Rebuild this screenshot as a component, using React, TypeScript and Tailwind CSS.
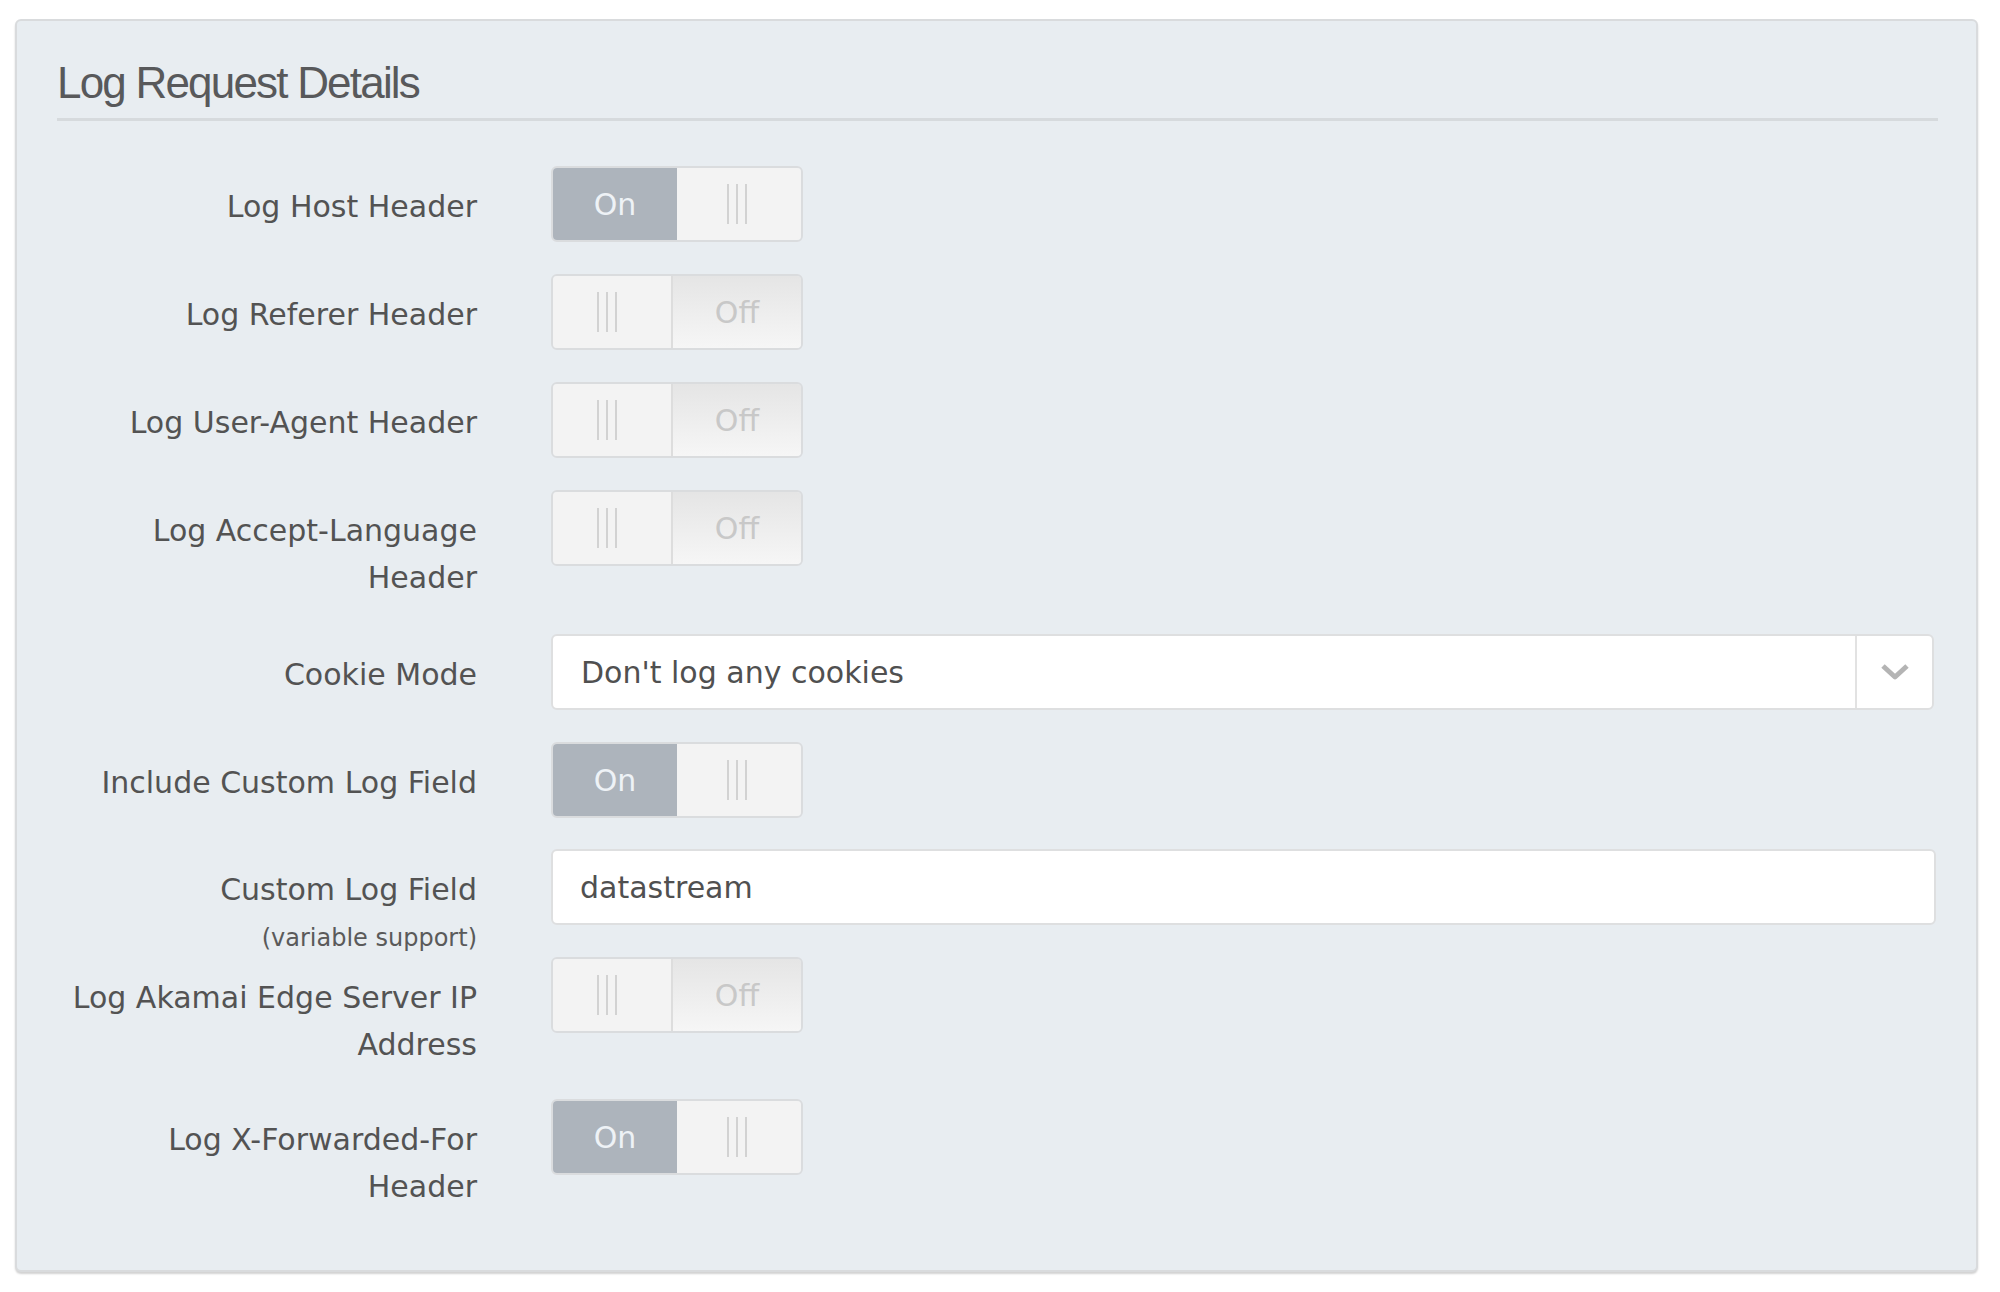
import type { ReactNode } from 'react'

const sans = "font-['DejaVu_Sans',Verdana,sans-serif]"

function Grip() {
  return (
    <div className="flex h-[40px] gap-[7px]">
      <span className="w-[2px] bg-[#d2d2d2]" />
      <span className="w-[2px] bg-[#d2d2d2]" />
      <span className="w-[2px] bg-[#d2d2d2]" />
    </div>
  )
}

function Toggle({ on }: { on: boolean }) {
  return (
    <div className="flex h-[76px] w-[252px] overflow-hidden rounded-[6px] border-2 border-[#dadcde]">
      {on ? (
        <>
          <div className="flex w-[124px] items-center justify-center bg-[#adb4bc] text-[30px] text-[#eef2f6]">
            On
          </div>
          <div className="flex flex-1 items-center justify-center bg-[#f3f3f3] pr-[4px]">
            <Grip />
          </div>
        </>
      ) : (
        <>
          <div className="flex w-[120px] items-center justify-center border-r-2 border-[#dddddd] bg-[#f3f3f3] pr-[10px]">
            <Grip />
          </div>
          <div className="flex flex-1 items-center justify-center bg-gradient-to-b from-[#e5e5e5] to-[#f6f6f6] text-[30px] text-[#c8c8c8]">
            Off
          </div>
        </>
      )}
    </div>
  )
}

function Select({ value }: { value: string }) {
  return (
    <div className="mr-[4px] flex h-[76px] rounded-[6px] border-2 border-[#dedfe0] bg-white">
      <div className="flex flex-1 items-center pl-[28px] text-[30px] text-[#505050]">{value}</div>
      <div className="flex w-[77px] items-center justify-center border-l-2 border-[#e2e2e2]">
        <svg width="32" height="20" viewBox="0 0 32 20">
          <polyline points="4,4 16,15 28,4" fill="none" stroke="#b4b4b4" strokeWidth="5" strokeLinejoin="round" />
        </svg>
      </div>
    </div>
  )
}

function TextInput({ value }: { value: string }) {
  return (
    <div className="mr-[2px] flex h-[76px] items-center rounded-[6px] border-2 border-[#dedfe0] bg-white pl-[27px] text-[30px] text-[#505050]">
      {value}
    </div>
  )
}

type Row = {
  label: string[]
  sub?: string
  mt: string
  control: ReactNode
}

const rows: Row[] = [
  { label: ['Log Host Header'], mt: 'mt-[45px]', control: <Toggle on /> },
  { label: ['Log Referer Header'], mt: 'mt-[32px]', control: <Toggle on={false} /> },
  { label: ['Log User-Agent Header'], mt: 'mt-[32px]', control: <Toggle on={false} /> },
  { label: ['Log Accept-Language', 'Header'], mt: 'mt-[32px]', control: <Toggle on={false} /> },
  { label: ['Cookie Mode'], mt: 'mt-[33px]', control: <Select value="Don't log any cookies" /> },
  { label: ['Include Custom Log Field'], mt: 'mt-[32px]', control: <Toggle on /> },
  {
    label: ['Custom Log Field'],
    sub: '(variable support)',
    mt: 'mt-[31px]',
    control: <TextInput value="datastream" />,
  },
  { label: ['Log Akamai Edge Server IP', 'Address'], mt: 'mt-[4px]', control: <Toggle on={false} /> },
  { label: ['Log X-Forwarded-For', 'Header'], mt: 'mt-[31px]', control: <Toggle on /> },
]

export default function App() {
  return (
    <div className={`min-h-screen bg-white pl-[15px] pt-[19px] ${sans}`}>
      <div className="w-[1963px] rounded-[6px] border-2 border-[#d9dbdd] bg-[#e8edf1] pb-[60px] pl-[40px] pr-[38px] pt-[37px] shadow-[0_2px_2px_rgba(0,0,0,0.18)]">
        <h2 className="border-b-[3px] border-[#d6dadd] pb-[11px] font-['Liberation_Sans',Arial,sans-serif] text-[44px] leading-[49px] tracking-[-1.8px] text-[#58595b]">
          Log Request Details
        </h2>

        {rows.map((row) => (
          <div key={row.label.join(' ')} className={`flex items-start ${row.mt}`}>
            <div className="w-[420px] shrink-0 pt-[17px] text-right text-[30px] leading-[47px] text-[#535353]">
              {row.label.map((line) => (
                <div key={line}>{line}</div>
              ))}
              {row.sub && (
                <div className="mt-[10px] text-[24px] leading-[30px] text-[#5a5a5a]">{row.sub}</div>
              )}
            </div>
            <div className="ml-[74px] flex-1">{row.control}</div>
          </div>
        ))}
      </div>
    </div>
  )
}
